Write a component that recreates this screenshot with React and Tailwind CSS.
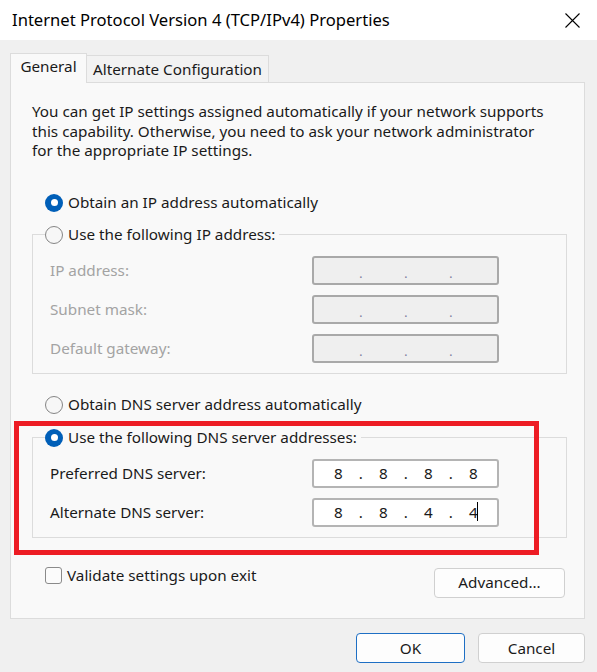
import React from 'react';

const Radio = ({ checked }) =>
  checked ? (
    <span className="w-[18px] h-[18px] rounded-full bg-[#005fb8] flex items-center justify-center shrink-0">
      <span className="w-[7px] h-[7px] rounded-full bg-white" />
    </span>
  ) : (
    <span className="w-[18px] h-[18px] rounded-full border border-[#858585] bg-[#f7f7f7] shrink-0" />
  );

const RadioRow = ({ checked, label }) => (
  <div className="flex items-center h-[20px] gap-[5px]">
    <Radio checked={checked} />
    <span className="whitespace-nowrap">{label}</span>
  </div>
);

const IpBox = ({ values, disabled, caret }) => {
  const parts = values || ['', '', '', ''];
  return (
    <div
      className={
        'w-[187px] h-[29px] rounded-[3px] border-2 flex items-center pl-[13px] ' +
        (disabled ? 'bg-[#efefef] border-[#a9a9a9]' : 'bg-white border-[#b4b4b4]')
      }
    >
      {parts.map((p, i) => (
        <React.Fragment key={i}>
          <span className="relative w-[22.5px] text-center text-[#1a1a1a]">
            {p}
            {caret && i === 3 && <span className="absolute left-[15px] top-[1px] w-px h-[19px] bg-black" />}
          </span>
          {i < 3 && (
            <span className={'w-[22.5px] text-center ' + (disabled ? 'text-[#7a7a9c] text-[12px] pt-[8px]' : 'text-[#1a1a1a]')}>.</span>
          )}
        </React.Fragment>
      ))}
    </div>
  );
};

const FieldRow = ({ label, disabled, values, caret }) => (
  <div className="flex items-center">
    <span className={'w-[262px] ' + (disabled ? 'text-[#a3a3a3]' : 'text-[#1a1a1a]')}>{label}</span>
    <IpBox values={values} disabled={disabled} caret={caret} />
  </div>
);

const Button = ({ children, primary, className }) => (
  <div
    className={
      'h-[30px] rounded-[4px] bg-[#fdfdfd] flex items-center justify-center ' +
      (primary ? 'border border-[#1e6fc4] ' : 'border border-[#d0d0d0] ') +
      (className || '')
    }
  >
    {children}
  </div>
);

export default function App() {
  return (
    <div className="relative w-[597px] h-[672px] bg-[#f0f0f0] flex flex-col overflow-hidden font-['Noto_Sans',sans-serif] text-[15.25px] text-[#1a1a1a]">
      {/* title bar */}
      <div className="h-[40px] bg-white flex items-center justify-between pl-[12px] pr-[17px] shrink-0">
        <span className="text-[16.6px] text-black">Internet Protocol Version 4 (TCP/IPv4) Properties</span>
        <svg width="15" height="15" viewBox="0 0 15 15" className="text-black">
          <path d="M0.5 0.5 L14.5 14.5 M14.5 0.5 L0.5 14.5" stroke="currentColor" strokeWidth="1.1" />
        </svg>
      </div>

      <div className="flex flex-col pl-[10px] pr-[12px] pt-[13px]">
        {/* tabs */}
        <div className="relative z-10 flex items-end h-[30px] -mb-px">
          <div className="w-[77px] h-[30px] bg-[#f9f9f9] border border-b-0 border-[#dcdcdc] flex items-start justify-center pt-[1px]">
            General
          </div>
          <div className="w-[182px] h-[28px] bg-[#f2f2f2] border border-l-0 border-[#dcdcdc] flex items-center justify-center">
            Alternate Configuration
          </div>
        </div>

        {/* panel */}
        <div className="h-[537px] border border-[#dcdcdc] bg-[#f9f9f9] flex flex-col">
          <p className="pl-[21px] pt-[19px] pr-[10px] leading-[19.6px] whitespace-nowrap">
            You can get IP settings assigned automatically if your network supports
            <br />
            this capability. Otherwise, you need to ask your network administrator
            <br />
            for the appropriate IP settings.
          </p>

          <div className="pl-[34px] mt-[32px]">
            <RadioRow checked label="Obtain an IP address automatically" />
          </div>

          <fieldset className="ml-[21px] mr-[17px] mt-[12px] border border-[#dcdcdc] pb-[10px]">
            <legend className="ml-[12px] pr-[4px]">
              <RadioRow label="Use the following IP address:" />
            </legend>
            <div className="flex flex-col gap-[10px] mt-[11px] pl-[17px]">
              <FieldRow label="IP address:" disabled />
              <FieldRow label="Subnet mask:" disabled />
              <FieldRow label="Default gateway:" disabled />
            </div>
          </fieldset>

          <div className="pl-[34px] mt-[21px]">
            <RadioRow label="Obtain DNS server address automatically" />
          </div>

          <fieldset className="ml-[21px] mr-[17px] mt-[13px] border border-[#dcdcdc] pb-[10px]">
            <legend className="ml-[12px] pr-[4px]">
              <RadioRow checked label="Use the following DNS server addresses:" />
            </legend>
            <div className="flex flex-col gap-[10px] mt-[11px] pl-[17px]">
              <FieldRow label="Preferred DNS server:" values={['8', '8', '8', '8']} />
              <FieldRow label="Alternate DNS server:" values={['8', '8', '4', '4']} caret />
            </div>
          </fieldset>

          <div className="flex items-start justify-between pl-[34px] pr-[19px] mt-[28px]">
            <div className="flex items-center gap-[5px] h-[20px]">
              <span className="w-[17px] h-[17px] rounded-[3px] border border-[#8a8a8a] bg-[#fbfbfb]" />
              <span>Validate settings upon exit</span>
            </div>
            <Button className="w-[131px] mt-[2px]">Advanced...</Button>
          </div>
        </div>

        {/* dialog buttons */}
        <div className="flex justify-end gap-[13px] pt-[14px]">
          <Button primary className="w-[109px]">OK</Button>
          <Button className="w-[107px]">Cancel</Button>
        </div>
      </div>

      {/* red annotation */}
      <div className="absolute left-[14px] top-[421px] w-[525px] h-[134px] border-[5px] border-[#ed1c24] pointer-events-none" />
    </div>
  );
}
